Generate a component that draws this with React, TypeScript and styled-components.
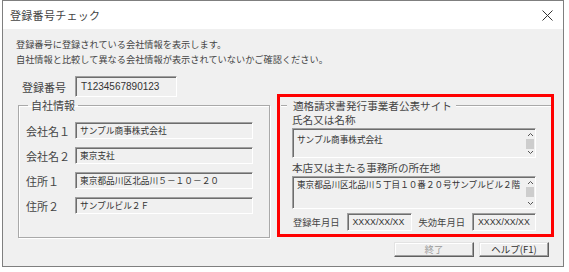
import React from "react";
import styled, { createGlobalStyle } from "styled-components";

const JP = `"Noto Sans CJK JP", "Noto Sans", sans-serif`;

const Global = createGlobalStyle`
  html, body { margin: 0; padding: 0; background: #ffffff; }
  body { font-family: ${JP}; }
  * { box-sizing: border-box; }
`;

const Window = styled.div`
  margin-left: 2px;
  width: 562px;
  height: 267px;
  border: 1px solid #7f7f7f;
  display: flex;
  flex-direction: column;
  background: #f0f0f0;
  font-family: ${JP};
`;

const TitleBar = styled.div`
  height: 28px;
  flex-shrink: 0;
  background: #ffffff;
  display: flex;
  align-items: center;
  justify-content: space-between;
  padding: 0 10px 0 7px;
`;

const Title = styled.span`
  font-size: 11px;
  line-height: 14px;
  color: #444444;
  letter-spacing: 0.3px;
`;

const CloseButton = styled.span`
  display: flex;
  width: 11px;
  height: 11px;
`;

const Body = styled.div`
  flex: 1;
  display: flex;
  flex-direction: column;
  padding: 8px 9px 0 13px;
`;

const Desc = styled.p`
  margin: 0;
  font-size: 9.2px;
  line-height: 15px;
  color: #444444;
  white-space: nowrap;
`;

const Columns = styled.div`
  display: flex;
  align-items: flex-end;
  gap: 7px;
  padding-left: 2px;
`;

const LeftCol = styled.div`
  width: 252px;
  display: flex;
  flex-direction: column;
`;

const RegRow = styled.div`
  margin-top: 9px;
  height: 21px;
  display: flex;
  align-items: center;
  gap: 9px;
  padding-left: 4px;
`;

const Label = styled.span<{ $size?: number }>`
  font-size: ${(p) => p.$size ?? 11}px;
  line-height: 14px;
  color: #444444;
  white-space: nowrap;
`;

const Field = styled.div<{ $w?: number; $h: number; $latin?: boolean; $size?: number }>`
  width: ${(p) => (p.$w ? `${p.$w}px` : "auto")};
  height: ${(p) => p.$h}px;
  display: flex;
  align-items: center;
  padding-left: ${(p) => (p.$latin ? 5 : 4)}px;
  background: #f0f0f0;
  border: 1px solid;
  border-color: #a0a0a0 #ffffff #ffffff #a0a0a0;
  box-shadow: inset 1px 1px 0 #6d6d6d;
  font-family: ${(p) => (p.$latin ? `"Liberation Sans", Arial, sans-serif` : JP)};
  font-size: ${(p) => p.$size ?? 8.7}px;
  color: #333333;
  white-space: nowrap;
  overflow: hidden;
`;

const Group = styled.fieldset`
  margin: 1px 0 0;
  padding: 10px 16px 23px 7px;
  min-width: 0;
  border: 1px solid #a9a9a9;
  box-shadow: inset 1px 1px 0 #ffffff, 1px 1px 0 #ffffff;
  display: grid;
  grid-template-columns: 49px 178px;
  grid-auto-rows: 17px;
  row-gap: 8px;
  align-items: center;
`;

const Legend = styled.legend`
  margin-left: 2px;
  padding: 0 3px;
  font-size: 11px;
  line-height: 14px;
  color: #444444;
`;

const RedBox = styled.section`
  width: 277px;
  height: 143px;
  margin-bottom: 1px;
  border: 3px solid #ff0000;
  padding: 2px 0 0 1px;
  display: flex;
  flex-direction: column;
`;

const GroupHead = styled.div`
  height: 13px;
  display: flex;
  align-items: center;
  font-size: 10.6px;
  line-height: 13px;
  color: #444444;
  white-space: nowrap;
  &::before,
  &::after {
    content: "";
    height: 0;
    border-top: 1px solid #a9a9a9;
    border-bottom: 1px solid #ffffff;
  }
  &::before {
    width: 6px;
    margin-right: 6px;
  }
  &::after {
    flex: 1;
    margin-left: 4px;
  }
`;

const GroupBody = styled.div`
  display: flex;
  flex-direction: column;
  padding: 0 15px 0 11px;
`;

const SiteLabel = styled.span<{ $gap: number }>`
  margin-top: ${(p) => p.$gap}px;
  font-size: 10.6px;
  line-height: 14px;
  color: #444444;
  white-space: nowrap;
`;

const ScrollBox = styled.div<{ $h: number }>`
  margin-top: 1px;
  height: ${(p) => p.$h}px;
  display: flex;
  background: #f0f0f0;
  border: 1px solid;
  border-color: #a0a0a0 #ffffff #ffffff #a0a0a0;
  box-shadow: inset 1px 1px 0 #6d6d6d;
`;

const ScrollText = styled.div<{ $top: number }>`
  flex: 1;
  padding: ${(p) => p.$top}px 0 0 4px;
  font-size: 8.6px;
  line-height: 12px;
  color: #333333;
  white-space: nowrap;
  overflow: hidden;
`;

const ScrollBar = styled.div`
  width: 10px;
  display: flex;
  flex-direction: column;
  align-items: center;
  padding: 3px 0 2px;
`;

const Thumb = styled.div`
  width: 8px;
  height: 10px;
  margin-top: 2px;
  background: #cdcdcd;
`;

const Spacer = styled.div`
  flex: 1;
`;

const DateRow = styled.div`
  margin-top: 4px;
  height: 18px;
  display: flex;
  align-items: center;
`;

const DateGroup = styled.div<{ $right?: boolean }>`
  display: flex;
  align-items: center;
  gap: 7px;
  margin-left: ${(p) => (p.$right ? "auto" : "1px")};
`;

const ButtonRow = styled.div`
  margin-top: 4px;
  padding-right: 5px;
  display: flex;
  justify-content: flex-end;
  gap: 5px;
`;

const Button = styled.button<{ $w: number; $muted?: boolean }>`
  width: ${(p) => p.$w}px;
  height: 15px;
  padding: 0;
  font-family: ${JP};
  font-size: 9.5px;
  line-height: 1;
  color: ${(p) => (p.$muted ? "#9a9a9a" : "#333333")};
  background: #efefef;
  border: 1px solid;
  border-color: #e3e3e3 #5f5f5f #5f5f5f #e3e3e3;
  box-shadow: inset -1px -1px 0 #a0a0a0, inset 1px 1px 0 #ffffff;
`;

const Chevron = ({ up }: { up?: boolean }) => (
  <svg width="7" height="5" viewBox="0 0 7 5">
    <path
      d={up ? "M1 4 L3.5 1.5 L6 4" : "M1 1 L3.5 3.5 L6 1"}
      fill="none"
      stroke="#555"
      strokeWidth="1"
    />
  </svg>
);

const Scroll = () => (
  <ScrollBar>
    <Chevron up />
    <Thumb />
    <Spacer />
    <Chevron />
  </ScrollBar>
);

const rows = [
  ["会社名１", "サンプル商事株式会社"],
  ["会社名２", "東京支社"],
  ["住所１", "東京都品川区北品川５－１０－２０"],
  ["住所２", "サンプルビル２Ｆ"],
];

export default function App() {
  return (
    <>
      <Global />
      <Window>
        <TitleBar>
          <Title>登録番号チェック</Title>
          <CloseButton>
            <svg width="11" height="11" viewBox="0 0 11 11">
              <path d="M0.5 0.5 L10.5 10.5 M10.5 0.5 L0.5 10.5" stroke="#333" strokeWidth="1" />
            </svg>
          </CloseButton>
        </TitleBar>
        <Body>
          <Desc>登録番号に登録されている会社情報を表示します。</Desc>
          <Desc>自社情報と比較して異なる会社情報が表示されていないかご確認ください。</Desc>
          <Columns>
            <LeftCol>
              <RegRow>
                <Label>登録番号</Label>
                <Field $w={102} $h={21} $latin $size={10}>
                  T1234567890123
                </Field>
              </RegRow>
              <Group>
                <Legend>自社情報</Legend>
                {rows.map(([label, value]) => (
                  <React.Fragment key={label}>
                    <Label>{label}</Label>
                    <Field $h={17}>{value}</Field>
                  </React.Fragment>
                ))}
              </Group>
            </LeftCol>
            <RedBox>
              <GroupHead>適格請求書発行事業者公表サイト</GroupHead>
              <GroupBody>
                <SiteLabel $gap={1}>氏名又は名称</SiteLabel>
                <ScrollBox $h={30}>
                  <ScrollText $top={4}>サンプル商事株式会社</ScrollText>
                  <Scroll />
                </ScrollBox>
                <SiteLabel $gap={3}>本店又は主たる事務所の所在地</SiteLabel>
                <ScrollBox $h={33}>
                  <ScrollText $top={1}>東京都品川区北品川５丁目１０番２０号サンプルビル２階</ScrollText>
                  <Scroll />
                </ScrollBox>
                <DateRow>
                  <DateGroup>
                    <Label $size={9.3}>登録年月日</Label>
                    <Field $w={65} $h={18} $latin $size={8.8}>
                      XXXX/XX/XX
                    </Field>
                  </DateGroup>
                  <DateGroup $right>
                    <Label $size={9.3}>失効年月日</Label>
                    <Field $w={64} $h={18} $latin $size={8.8}>
                      XXXX/XX/XX
                    </Field>
                  </DateGroup>
                </DateRow>
              </GroupBody>
            </RedBox>
          </Columns>
          <ButtonRow>
            <Button $w={80} $muted>
              終了
            </Button>
            <Button $w={70}>ヘルプ(F1)</Button>
          </ButtonRow>
        </Body>
      </Window>
    </>
  );
}
